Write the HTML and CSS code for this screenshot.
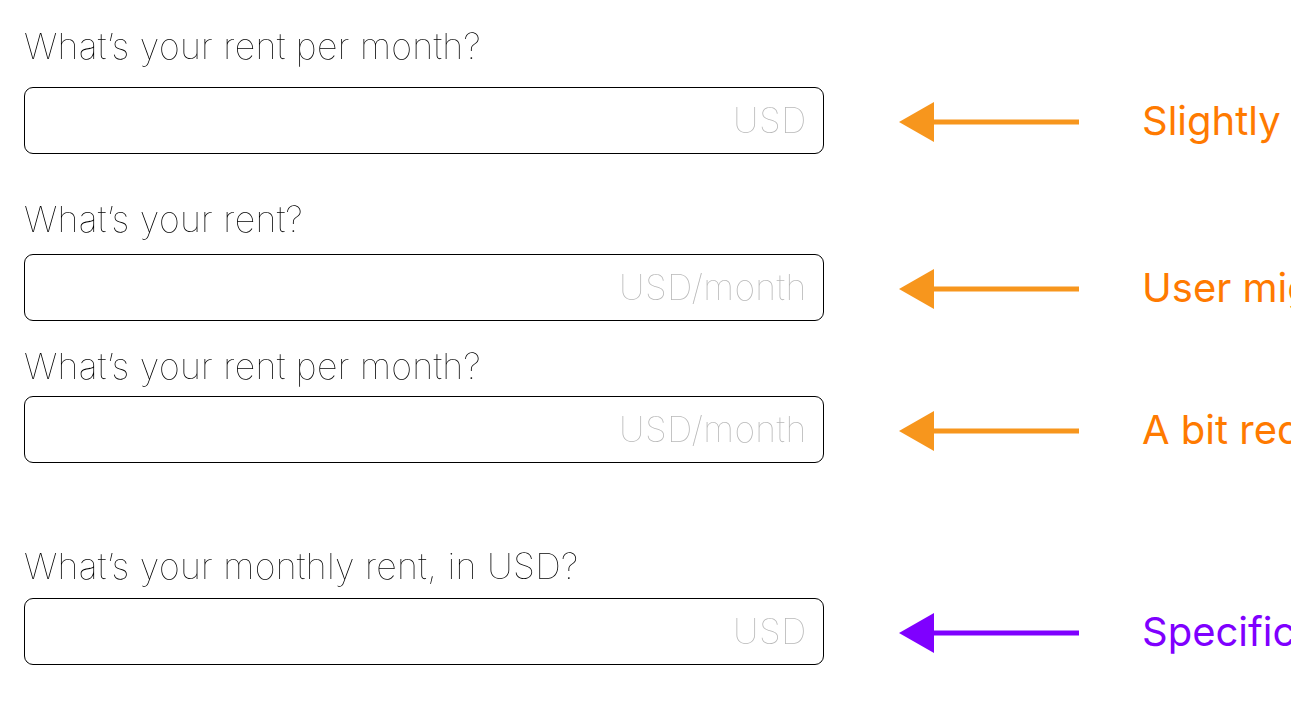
FILE: index.html
```html
<!DOCTYPE html>
<html lang="en">
<head>
<meta charset="utf-8">
<title>Rent question variants</title>
<link rel="stylesheet" href="styles.css">
</head>
<body>
<main class="page">
  <section class="q q-1">
    <div class="label">What’s your rent per month?</div>
    <div class="line">
      <div class="box"><span class="unit">USD</span></div>
      <svg class="arrow orange" viewBox="0 0 180 40" width="180" height="40"><polygon points="0,20 35,0 35,40"/><rect x="34" y="17.5" width="146" height="5"/></svg>
      <div class="note orange-text">Slightly ambiguous</div>
    </div>
  </section>
  <section class="q q-2">
    <div class="label">What’s your rent?</div>
    <div class="line">
      <div class="box"><span class="unit">USD/month</span></div>
      <svg class="arrow orange" viewBox="0 0 180 40" width="180" height="40"><polygon points="0,20 35,0 35,40"/><rect x="34" y="17.5" width="146" height="5"/></svg>
      <div class="note orange-text">User might miss the unit</div>
    </div>
  </section>
  <section class="q q-3">
    <div class="label">What’s your rent per month?</div>
    <div class="line">
      <div class="box"><span class="unit">USD/month</span></div>
      <svg class="arrow orange" viewBox="0 0 180 40" width="180" height="40"><polygon points="0,20 35,0 35,40"/><rect x="34" y="17.5" width="146" height="5"/></svg>
      <div class="note orange-text">A bit redundant</div>
    </div>
  </section>
  <section class="q q-4">
    <div class="label">What’s your monthly rent, in USD?</div>
    <div class="line">
      <div class="box"><span class="unit">USD</span></div>
      <svg class="arrow purple" viewBox="0 0 180 40" width="180" height="40"><polygon points="0,20 35,0 35,40"/><rect x="34" y="17.5" width="146" height="5"/></svg>
      <div class="note purple-text">Specific and clear</div>
    </div>
  </section>
</main>
</body>
</html>
```

FILE: styles.css
```css
html, body {
  margin: 0;
  padding: 0;
  background: #ffffff;
  overflow: hidden;
}

.page {
  width: 1291px;
  height: 728px;
  overflow: hidden;
  padding-left: 24px;
  box-sizing: border-box;
  font-family: Inter, "Noto Sans", sans-serif;
  white-space: nowrap;
}

.q {
  display: flex;
  flex-direction: column;
}

.q-1 { padding-top: 26px; }
.q-2 { margin-top: 45px; }
.q-3 { margin-top: 25px; }
.q-4 { margin-top: 83px; }

.label {
  font-size: 35.8px;
  line-height: 40px;
  font-weight: 100;
  letter-spacing: 0.28px;
  color: #000;
  margin-bottom: 17px;
  will-change: transform;
}
.q-1 .label { margin-bottom: 21px; }
.q-2 .label { margin-bottom: 15px; }
.q-3 .label { margin-bottom: 10px; }
.q-4 .label { margin-bottom: 12px; }

.line {
  display: flex;
  align-items: center;
}

.box {
  flex: none;
  width: 800px;
  height: 67px;
  box-sizing: border-box;
  border: 1px solid #000;
  border-radius: 9px;
  display: flex;
  align-items: center;
  justify-content: flex-end;
  padding-right: 16px;
}

.unit {
  font-size: 35.5px;
  font-weight: 100;
  letter-spacing: 0.4px;
  color: #b8b8b8;
  will-change: transform;
}

.arrow {
  flex: none;
  margin-left: 75px;
  margin-top: 2px;
}
.arrow.orange { fill: #f7961d; }
.arrow.purple { fill: #7f00ff; }

.note {
  flex: none;
  margin-left: 63px;
  font-size: 40px;
  font-weight: 400;
}
.orange-text { color: #ff7a00; }
.purple-text { color: #7f00ff; }
```
